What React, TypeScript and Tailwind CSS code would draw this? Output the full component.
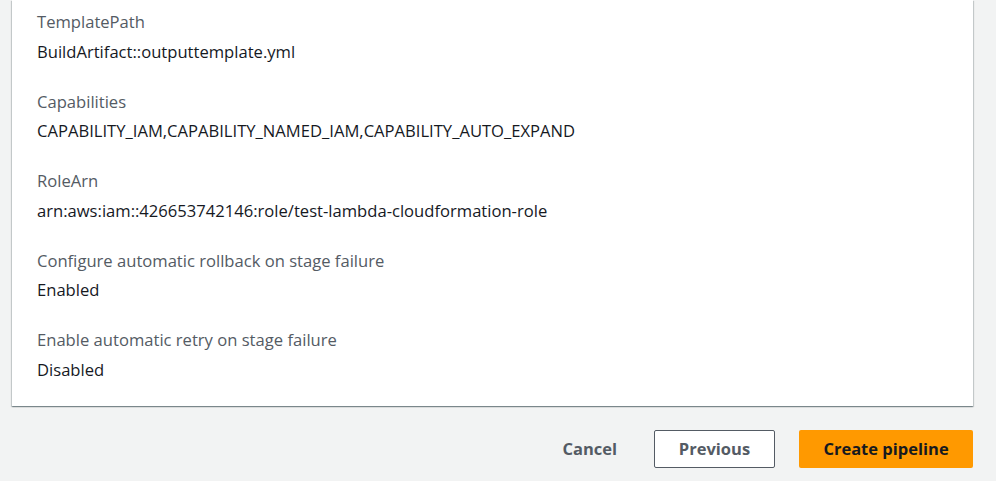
import React from "react";

const items: [string, string][] = [
  ["TemplatePath", "BuildArtifact::outputtemplate.yml"],
  ["Capabilities", "CAPABILITY_IAM,CAPABILITY_NAMED_IAM,CAPABILITY_AUTO_EXPAND"],
  ["RoleArn", "arn:aws:iam::426653742146:role/test-lambda-cloudformation-role"],
  ["Configure automatic rollback on stage failure", "Enabled"],
  ["Enable automatic retry on stage failure", "Disabled"],
];

export default function App() {
  return (
    <div
      className="w-[996px] h-[481px] overflow-hidden bg-[#f2f3f3] pl-[12px] pr-[23px]"
      style={{ fontFamily: '"Open Sans", "Noto Sans", Arial, sans-serif' }}
    >
      <div className="bg-white pt-[12px] pb-[26.5px] pl-[25px] shadow-[0_1px_1px_0_rgba(0,28,36,0.3),1px_1px_1px_0_rgba(0,28,36,0.15),-1px_1px_1px_0_rgba(0,28,36,0.15)] flex flex-col gap-[30px]">
        {items.map(([label, value]) => (
          <div key={label} className="flex flex-col gap-[9.5px]">
            <div className="text-[16.6px] leading-[20px] text-[#545b64] whitespace-nowrap">{label}</div>
            <div className="text-[16.6px] leading-[20px] text-[#16191f] whitespace-nowrap">{value}</div>
          </div>
        ))}
      </div>
      <div className="mt-[24px] flex justify-end items-center">
        <button className="h-[38px] text-[16.5px] font-bold text-[#545b64] mr-[37px]">
          Cancel
        </button>
        <button className="h-[38px] w-[121px] border border-[#545b64] bg-white rounded-[2px] text-[16.5px] font-bold text-[#545b64] mr-[24px]">
          Previous
        </button>
        <button className="h-[38px] w-[174px] bg-[#ff9900] rounded-[2px] text-[16.5px] font-bold text-[#16191f]">
          Create pipeline
        </button>
      </div>
    </div>
  );
}
